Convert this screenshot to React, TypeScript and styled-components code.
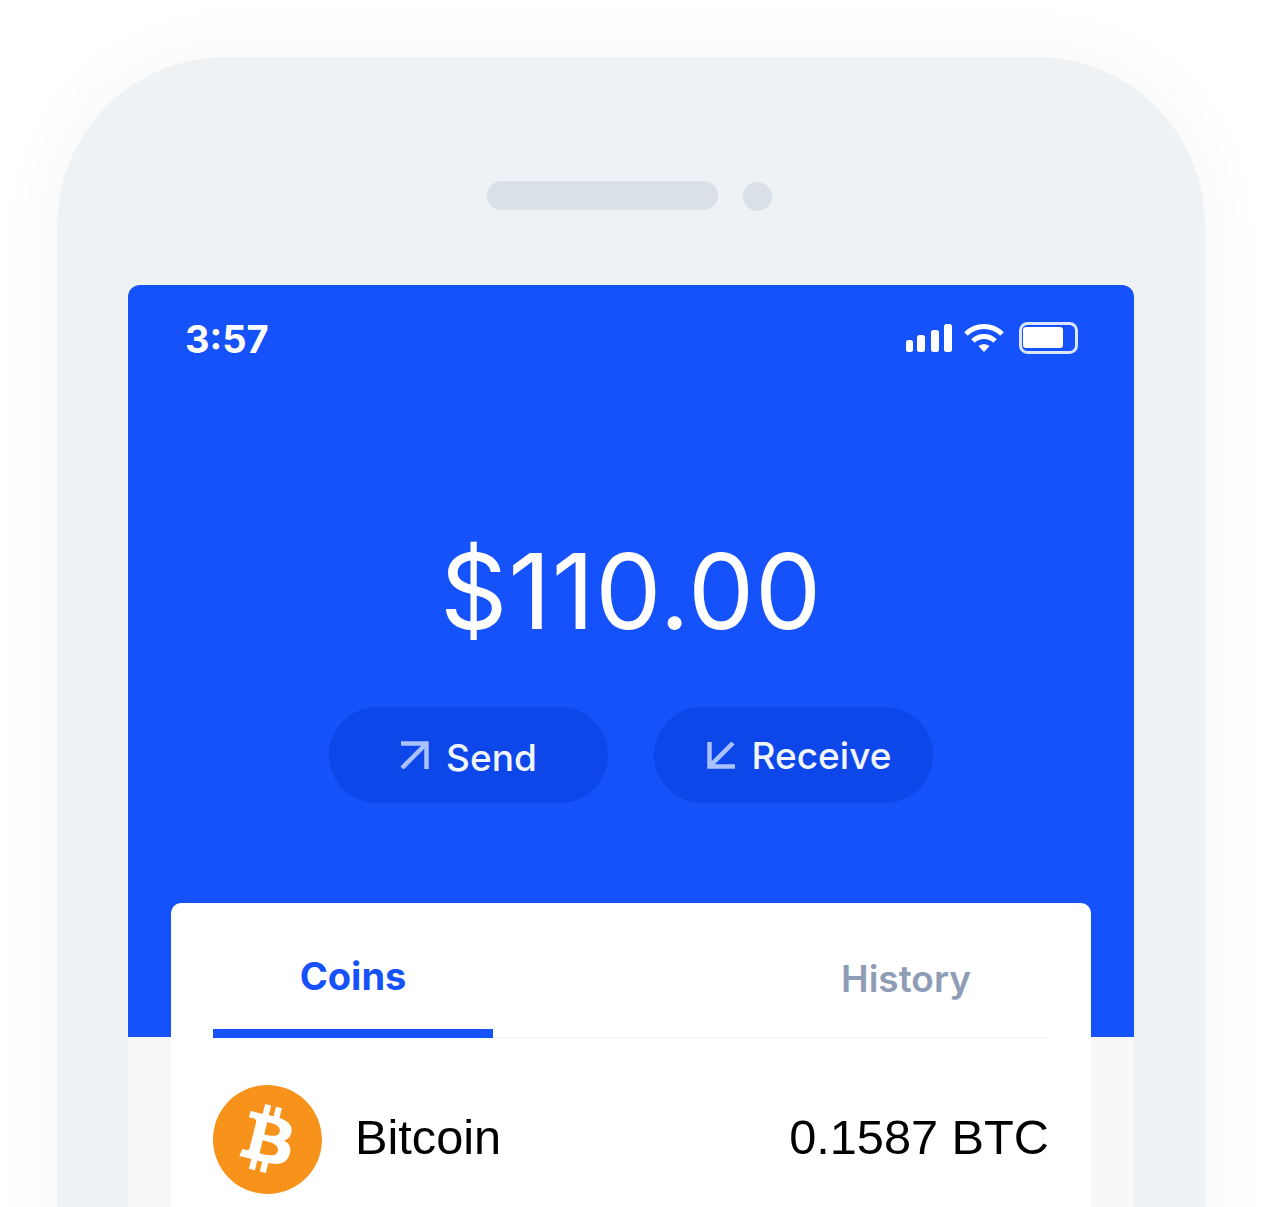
import React from 'react'
import styled, { createGlobalStyle } from 'styled-components'
import { SiBitcoin } from 'react-icons/si'

const GlobalStyle = createGlobalStyle`
	html, body {
		margin: 0;
		background: #fff;
		font-family: Inter, 'Liberation Sans', sans-serif;
	}
`

const Page = styled.div`
	height: 1207px;
	overflow: hidden;
	padding: 57px 74px 0 57px;
	box-sizing: border-box;
`

const Phone = styled.div`
	width: 1148px;
	height: 1300px;
	padding: 124px 71px 0;
	box-sizing: border-box;
	background: #eff2f5;
	border-radius: 168px 168px 0 0;
	box-shadow: 0 0 70px rgba(60, 80, 110, 0.05);
`

const SensorRow = styled.div`
	display: flex;
	justify-content: center;
	gap: 25px;
	height: 29px;
	margin-bottom: 75px;
	padding-right: 4px;
`

const Speaker = styled.div`
	width: 231px;
	height: 29px;
	border-radius: 15px;
	background: #dae0e7;
`

const Camera = styled.div`
	width: 29px;
	height: 29px;
	margin-top: 1px;
	border-radius: 50%;
	background: #dae0e7;
`

const Screen = styled.div`
	height: 1000px;
	padding: 0 43px;
	border-radius: 12px 12px 0 0;
	background: linear-gradient(#1652f9 752px, #f6f8fa 752px);
`

const StatusBar = styled.div`
	display: flex;
	align-items: center;
	justify-content: space-between;
	height: 40px;
	padding: 33px 13px 0 14px;
`

const Time = styled.span`
	margin-top: 1px;
	color: #fff;
	font-size: 38px;
	font-weight: 700;
`

const StatusIcons = styled.div`
	display: flex;
	align-items: center;
	gap: 15px;
`

const SignalGroup = styled.div`
	display: flex;
	align-items: center;
	gap: 12px;
`

const Amount = styled.div`
	margin-top: 171px;
	color: #fff;
	font-size: 105px;
	font-weight: 400;
	line-height: 124px;
	text-align: center;
	letter-spacing: 0.8px;
`

const Actions = styled.div`
	display: flex;
	justify-content: center;
	gap: 46px;
	margin-top: 54px;
`

const ActionButton = styled.div<{ $nudge: number }>`
	display: flex;
	align-items: center;
	justify-content: center;
	gap: 17px;
	width: 279px;
	height: 96px;
	padding-left: ${p => p.$nudge}px;
	box-sizing: border-box;
	border-radius: 48px;
	background: #0d47e9;
	color: #f1f5ff;
	font-size: 37px;
	font-weight: 500;
`

const ActionLabel = styled.span<{ $drop: number }>`
	margin-top: ${p => p.$drop}px;
`

const Card = styled.div`
	margin-top: 100px;
	padding: 0 42px;
	height: 400px;
	border-radius: 10px 10px 0 0;
	background: #fff;
`

const Tabs = styled.div`
	display: flex;
	justify-content: space-between;
	height: 136px;
	box-sizing: border-box;
	border-bottom: 2px solid #f6f7f9;
`

const Tab = styled.div<{ $active?: boolean }>`
	width: 280px;
	height: 135px;
	box-sizing: border-box;
	padding: ${p => (p.$active ? '49px 0 0' : '52px 6px 0 0')};
	border-bottom: 9px solid ${p => (p.$active ? '#1652f9' : 'transparent')};
	color: ${p => (p.$active ? '#1652f9' : '#8e9cb6')};
	font-size: ${p => (p.$active ? 38 : 37)}px;
	font-weight: ${p => (p.$active ? 700 : 600)};
	line-height: 48px;
	text-align: center;
`

const CoinRow = styled.div`
	display: flex;
	align-items: center;
	margin-top: 46px;
	color: #000;
	font-family: 'Liberation Sans', Arial, sans-serif;
	font-size: 48.7px;
`

const CoinBadge = styled.div`
	width: 109px;
	height: 109px;
	color: #f7931a;
	background: #fff;
`

const CoinName = styled.span`
	flex: 1;
	margin-left: 33px;
	padding-bottom: 6px;
`

const CoinAmount = styled.span`
	padding-bottom: 6px;
`

const SignalIcon = () => (
	<svg width='46' height='28' viewBox='0 0 46 28' fill='#fff'>
		<rect x='0' y='16' width='7' height='12' rx='2.5' />
		<rect x='11' y='11' width='8' height='17' rx='2.5' />
		<rect x='25' y='6' width='8' height='22' rx='2.5' />
		<rect x='38' y='0' width='8' height='28' rx='2.5' />
	</svg>
)

const WifiIcon = () => (
	<svg width='40' height='30' viewBox='0 0 40 30' fill='none' stroke='#fff' strokeWidth='5'>
		<path d='M2 11 C12 1 28 1 38 11' />
		<path d='M9 18 C15 12 25 12 31 18' />
		<path d='M14.5 23 L20 29 L25.5 23 C22 20.5 18 20.5 14.5 23 Z' fill='#fff' stroke='none' />
	</svg>
)

const BatteryIcon = () => (
	<svg width='59' height='32' viewBox='0 0 59 32' fill='none'>
		<rect x='1.5' y='1.5' width='56' height='29' rx='7' stroke='#dbe5ff' strokeWidth='3' />
		<rect x='4' y='5' width='40' height='21' rx='3' fill='#fff' />
	</svg>
)

const SendIcon = () => (
	<svg width='29' height='28' viewBox='0 0 29 28' fill='none' stroke='#a9c2ff' strokeWidth='4.5'>
		<path d='M1 2.5 H26.5 V28' />
		<path d='M26.5 2.5 L2 27' />
	</svg>
)

const ReceiveIcon = () => (
	<svg width='28' height='27' viewBox='0 0 28 27' fill='none' stroke='#a9c2ff' strokeWidth='4.5'>
		<path d='M2.5 0 V24.5 H28' />
		<path d='M2.5 24.5 L26 1' />
	</svg>
)

const App = (): JSX.Element => {
	return (
		<>
			<GlobalStyle />
			<Page>
				<Phone>
					<SensorRow>
						<Speaker />
						<Camera />
					</SensorRow>
					<Screen>
						<StatusBar>
							<Time>3:57</Time>
							<StatusIcons>
								<SignalGroup>
									<SignalIcon />
									<WifiIcon />
								</SignalGroup>
								<BatteryIcon />
							</StatusIcons>
						</StatusBar>
						<Amount>$110.00</Amount>
						<Actions>
							<ActionButton $nudge={0}>
								<SendIcon />
								<ActionLabel $drop={5}>Send</ActionLabel>
							</ActionButton>
							<ActionButton $nudge={11}>
								<ReceiveIcon />
								<ActionLabel $drop={1}>Receive</ActionLabel>
							</ActionButton>
						</Actions>
						<Card>
							<Tabs>
								<Tab $active>Coins</Tab>
								<Tab>History</Tab>
							</Tabs>
							<CoinRow>
								<CoinBadge>
									<SiBitcoin size={109} />
								</CoinBadge>
								<CoinName>Bitcoin</CoinName>
								<CoinAmount>0.1587 BTC</CoinAmount>
							</CoinRow>
						</Card>
					</Screen>
				</Phone>
			</Page>
		</>
	)
}

export default App
